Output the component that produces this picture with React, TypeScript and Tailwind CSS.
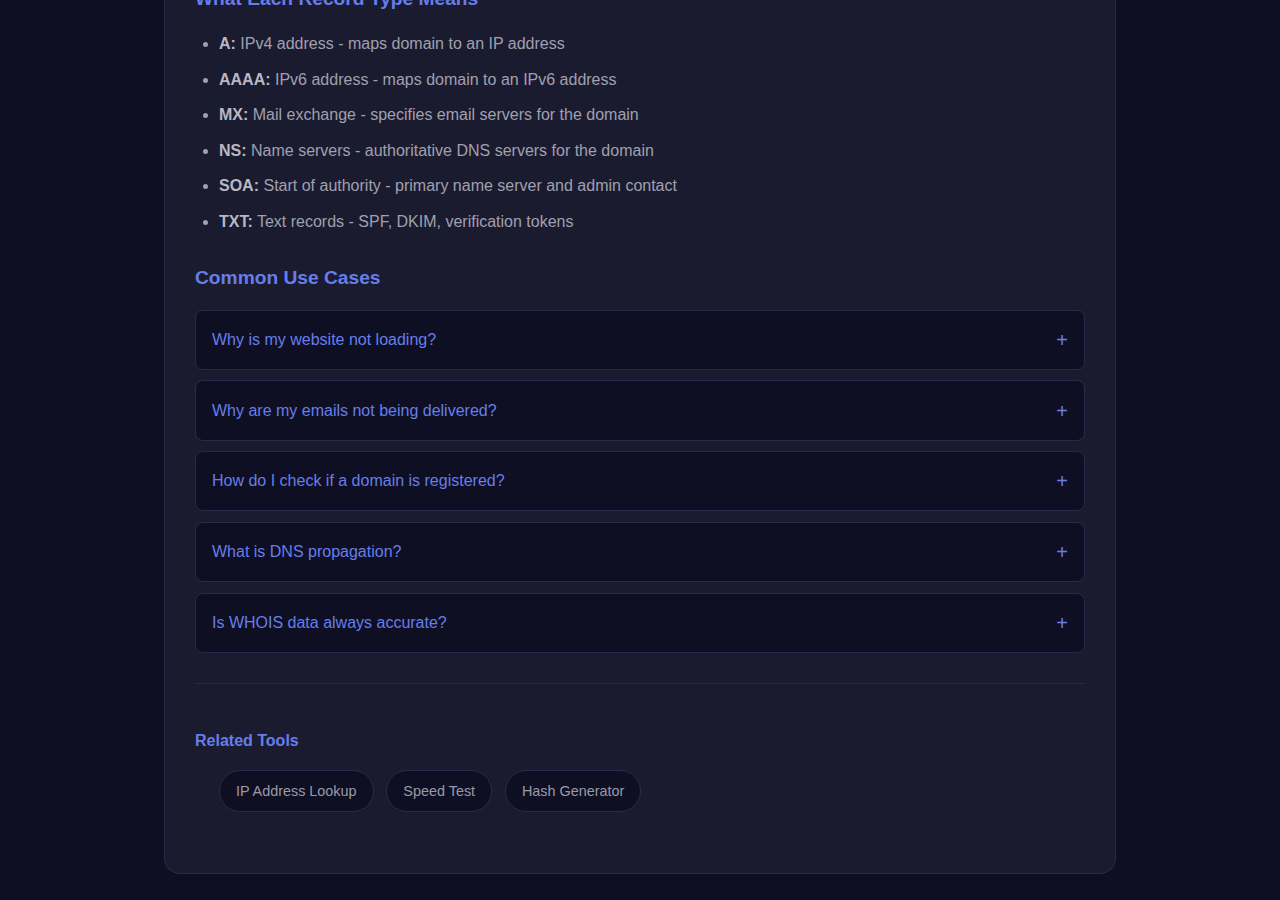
const records = [
  { type: "A", text: "IPv4 address - maps domain to an IP address" },
  { type: "AAAA", text: "IPv6 address - maps domain to an IPv6 address" },
  { type: "MX", text: "Mail exchange - specifies email servers for the domain" },
  { type: "NS", text: "Name servers - authoritative DNS servers for the domain" },
  { type: "SOA", text: "Start of authority - primary name server and admin contact" },
  { type: "TXT", text: "Text records - SPF, DKIM, verification tokens" },
];

const faqs = [
  "Why is my website not loading?",
  "Why are my emails not being delivered?",
  "How do I check if a domain is registered?",
  "What is DNS propagation?",
  "Is WHOIS data always accurate?",
];

const tools = ["IP Address Lookup", "Speed Test", "Hash Generator"];

export default function App() {
  return (
    <div className="min-h-[900px] w-full overflow-hidden bg-[#0f0f23] font-['Liberation_Sans',Arial,sans-serif]">
      <div className="mx-auto -mt-[43px] w-[952px] rounded-b-2xl border border-t-0 border-[#2a2a4a] bg-[#1b1b2f] px-[30px] pb-[61px] pt-[30px]">
        {/* record types */}
        <h3 className="mb-[21px] text-[19.2px] font-bold leading-[23px] text-[#667eea]">
          What Each Record Type Means
        </h3>
        <ul className="list-disc space-y-[10px] pl-6 text-[16px] leading-[25.6px] text-[#a0a0b0] marker:text-[#a0a0b0]">
          {records.map((r) => (
            <li key={r.type}>
              <strong className="font-bold text-[#b8b8c4]">{r.type}:</strong> {r.text}
            </li>
          ))}
        </ul>

        {/* faq */}
        <h3 className="mb-[21px] mt-[31px] text-[19.2px] font-bold leading-[23px] text-[#667eea]">
          Common Use Cases
        </h3>
        <div className="flex flex-col gap-[10.4px]">
          {faqs.map((q) => (
            <button
              key={q}
              className="flex w-full items-center justify-between rounded-lg border border-[#2a2a4a] bg-[#0f0f23] px-4 py-[16.4px] text-left text-[16px] leading-[25.6px] text-[#667eea]"
            >
              <span>{q}</span>
              <span className="text-[20px] leading-none">+</span>
            </button>
          ))}
        </div>

        <hr className="mt-[30px] border-0 border-t border-[#2a2a4a]" />

        {/* related */}
        <div className="pt-[47px]">
          <h4 className="text-[16px] font-bold leading-[20px] text-[#667eea]">Related Tools</h4>
          <ul className="mt-[19px] flex gap-[12.8px] pl-6">
            {tools.map((t) => (
              <li key={t}>
                <a
                  href="#"
                  className="block rounded-full border border-[#2a2a4a] bg-[#0f0f23] px-4 py-[10px] text-[14.4px] leading-[20.3px] text-[#9a9aa6]"
                >
                  {t}
                </a>
              </li>
            ))}
          </ul>
        </div>
      </div>
    </div>
  );
}
